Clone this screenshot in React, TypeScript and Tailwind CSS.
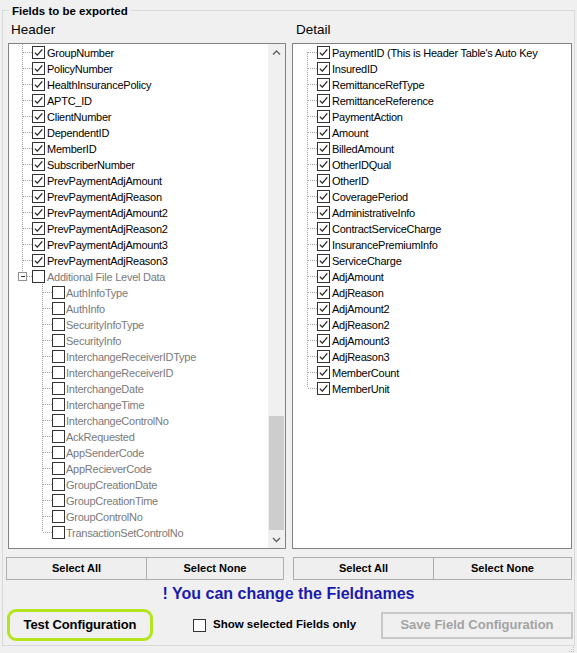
import React from "react";

const headerItems = [
  "GroupNumber",
  "PolicyNumber",
  "HealthInsurancePolicy",
  "APTC_ID",
  "ClientNumber",
  "DependentID",
  "MemberID",
  "SubscriberNumber",
  "PrevPaymentAdjAmount",
  "PrevPaymentAdjReason",
  "PrevPaymentAdjAmount2",
  "PrevPaymentAdjReason2",
  "PrevPaymentAdjAmount3",
  "PrevPaymentAdjReason3",
];

const additionalItems = [
  "AuthInfoType",
  "AuthInfo",
  "SecurityInfoType",
  "SecurityInfo",
  "InterchangeReceiverIDType",
  "InterchangeReceiverID",
  "InterchangeDate",
  "InterchangeTime",
  "InterchangeControlNo",
  "AckRequested",
  "AppSenderCode",
  "AppRecieverCode",
  "GroupCreationDate",
  "GroupCreationTime",
  "GroupControlNo",
  "TransactionSetControlNo",
];

const detailItems = [
  "PaymentID (This is Header Table's Auto Key",
  "InsuredID",
  "RemittanceRefType",
  "RemittanceReference",
  "PaymentAction",
  "Amount",
  "BilledAmount",
  "OtherIDQual",
  "OtherID",
  "CoveragePeriod",
  "AdministrativeInfo",
  "ContractServiceCharge",
  "InsurancePremiumInfo",
  "ServiceCharge",
  "AdjAmount",
  "AdjReason",
  "AdjAmount2",
  "AdjReason2",
  "AdjAmount3",
  "AdjReason3",
  "MemberCount",
  "MemberUnit",
];

const LINE = "#a0a0a0";

function Conn({
  w,
  vx,
  vFrom,
  vTo,
  hFrom,
  expander,
}: {
  w: number;
  vx: number;
  vFrom: number;
  vTo: number;
  hFrom: number;
  expander?: boolean;
}) {
  return (
    <svg width={w} height={16} className="shrink-0 block" shapeRendering="crispEdges">
      {vTo > vFrom && (
        <line x1={vx + 0.5} y1={vFrom} x2={vx + 0.5} y2={vTo} stroke={LINE} strokeWidth={1} strokeDasharray="1 1" />
      )}
      <line x1={hFrom} y1={8.5} x2={w} y2={8.5} stroke={LINE} strokeWidth={1} strokeDasharray="1 1" />
      {expander && (
        <g>
          <rect x={vx - 3.5} y={4.5} width={8} height={8} fill="#ffffff" stroke="#919191" strokeWidth={1} />
          <line x1={vx - 1.5} y1={8.5} x2={vx + 3} y2={8.5} stroke="#333333" strokeWidth={1} />
        </g>
      )}
    </svg>
  );
}

function Check({ checked }: { checked: boolean }) {
  return (
    <div className="w-[13px] h-[13px] shrink-0 border border-[#333333] bg-white flex items-center justify-center">
      {checked && (
        <svg width={11} height={11} viewBox="0 0 11 11" className="block">
          <path d="M1.8 5.6 L4.3 8.1 L9.3 2.4" fill="none" stroke="#1e1e1e" strokeWidth={1.25} />
        </svg>
      )}
    </div>
  );
}

function Row({
  conn,
  checked,
  label,
  gray,
  textGap,
}: {
  conn: React.ReactNode;
  checked: boolean;
  label: string;
  gray?: boolean;
  textGap?: string;
}) {
  return (
    <div className="flex h-[16px] items-center">
      {conn}
      <Check checked={checked} />
      <span
        className={
          "mt-[2px] whitespace-nowrap text-[11px] leading-[16px] tracking-[-0.25px] " +
          (textGap ?? "ml-[2px]") +
          " " +
          (gray ? "text-[#7a7a7a]" : "text-black")
        }
      >
        {label}
      </span>
    </div>
  );
}

function Chevron({ up }: { up: boolean }) {
  return (
    <svg width={17} height={17} viewBox="0 0 17 17" className="block">
      <path
        d={up ? "M5 10.5 L8.5 7 L12 10.5" : "M5 7 L8.5 10.5 L12 7"}
        fill="none"
        stroke="#606060"
        strokeWidth={1.4}
      />
    </svg>
  );
}

function HeaderTree() {
  return (
    <div className="ml-[2px] w-[278px] h-[506px] border border-[#828282] bg-white flex overflow-hidden">
      <div className="flex-1 overflow-hidden">
        {headerItems.map((t) => (
          <Row key={t} conn={<Conn w={23} vx={13} vFrom={0} vTo={16} hFrom={14} />} checked label={t} />
        ))}
        <Row
          conn={<Conn w={23} vx={13} vFrom={0} vTo={4} hFrom={18} expander />}
          checked={false}
          label="Additional File Level Data"
          gray
        />
        {additionalItems.map((t, i) => (
          <Row
            key={t}
            conn={
              <Conn
                w={43}
                vx={33}
                vFrom={0}
                vTo={i === additionalItems.length - 1 ? 8 : 16}
                hFrom={34}
              />
            }
            checked={false}
            label={t}
            gray
            textGap="ml-[1px]"
          />
        ))}
      </div>
      <div className="w-[17px] shrink-0 bg-[#f0f0f0] flex flex-col">
        <Chevron up />
        <div className="flex-1 flex flex-col">
          <div className="mt-[355px] h-[114px] mx-[1px] bg-[#cdcdcd]" />
        </div>
        <Chevron up={false} />
      </div>
    </div>
  );
}

function DetailTree() {
  return (
    <div className="w-[280px] h-[506px] border border-[#828282] bg-white overflow-hidden">
      {detailItems.map((t, i) => (
        <Row
          key={t}
          conn={
            <Conn
              w={24}
              vx={14}
              vFrom={i === 0 ? 8 : 0}
              vTo={i === detailItems.length - 1 ? 8 : 16}
              hFrom={15}
            />
          }
          checked
          label={t}
        />
      ))}
    </div>
  );
}

function BtnPair({ extra, secondW }: { extra: string; secondW: string }) {
  return (
    <div className={"mt-[8px] flex h-[23px] " + extra}>
      <div className="w-[141px] h-full border border-[#adadad] bg-[#efefef] flex items-center justify-center text-[11px] font-bold">
        Select All
      </div>
      <div
        className={
          secondW +
          " h-full border border-l-0 border-[#adadad] bg-[#efefef] flex items-center justify-center text-[11px] font-bold"
        }
      >
        Select None
      </div>
    </div>
  );
}

export default function App() {
  return (
    <div className="w-[577px] h-[653px] bg-[#f0f0f0] font-['Liberation_Sans',Arial,sans-serif] text-black overflow-hidden">
      <div className="pt-[10px] px-[2px]">
        <div className="relative h-[636px] border border-[#d9d9d9]">
          <span className="absolute left-[6px] top-[-7px] bg-[#f0f0f0] px-[3px] text-[11.5px] leading-[14px] font-bold whitespace-nowrap">
            Fields to be exported
          </span>

          <div className="flex pl-[3px] gap-[6px] pt-[11px]">
            <div className="w-[280px] flex flex-col">
              <div className="pl-[5px] text-[13.5px] leading-[16px]">Header</div>
              <div className="mt-[5px]">
                <HeaderTree />
              </div>
              <BtnPair extra="" secondW="w-[137px]" />
            </div>
            <div className="w-[280px] flex flex-col">
              <div className="pl-[4px] text-[13.5px] leading-[16px]">Detail</div>
              <div className="mt-[5px]">
                <DetailTree />
              </div>
              <BtnPair extra="ml-[1px]" secondW="w-[138px]" />
            </div>
          </div>

          <div className="mt-[5px] text-center text-[16px] leading-[18px] font-bold text-[#1a1aae]">
            ! You can change the Fieldnames
          </div>

          <div className="mt-[6px] flex items-center h-[32px] pl-[4px] pr-[1px]">
            <div className="w-[146px] h-[32px] rounded-[9px] border-[3px] border-[#b4e41e] flex items-center justify-center text-[13px] font-bold tracking-[-0.1px]">
              Test Configuration
            </div>
            <div className="ml-[40px] flex items-center">
              <div className="w-[13px] h-[13px] border border-[#333333] bg-white" />
              <span className="ml-[7px] text-[11.5px] font-bold whitespace-nowrap">Show selected Fields only</span>
            </div>
            <div className="ml-auto w-[192px] h-[27px] border-2 border-[#c8c8c8] bg-[#f0f0f0] flex items-center justify-center text-[13px] font-bold text-[#a3a3a3]">
              Save Field Configuration
            </div>
          </div>
        </div>
        <div className="flex justify-end">
          <svg width={6} height={6} className="block mt-[1px]">
            <rect x={4} y={0} width={1} height={1} fill="#bdbdbd" />
            <rect x={2} y={2} width={1} height={1} fill="#bdbdbd" />
            <rect x={4} y={2} width={1} height={1} fill="#bdbdbd" />
            <rect x={0} y={4} width={1} height={1} fill="#bdbdbd" />
            <rect x={2} y={4} width={1} height={1} fill="#bdbdbd" />
            <rect x={4} y={4} width={1} height={1} fill="#bdbdbd" />
          </svg>
        </div>
      </div>
    </div>
  );
}
